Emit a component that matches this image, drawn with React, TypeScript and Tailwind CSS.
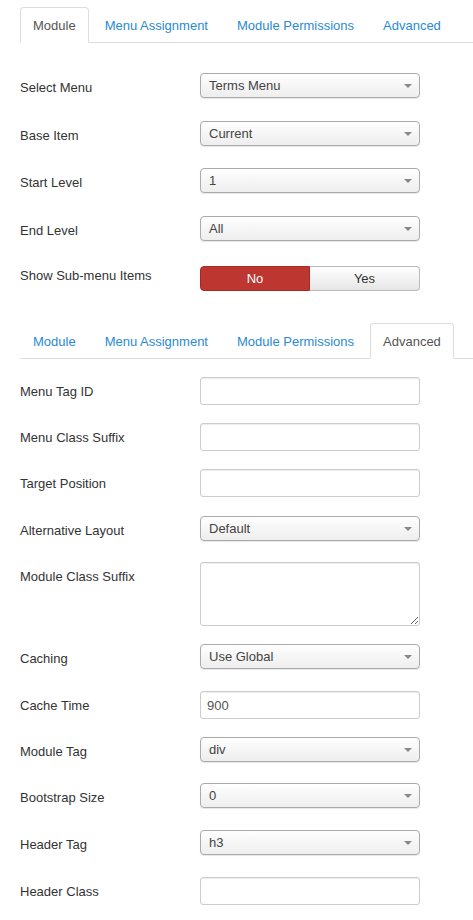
import type { ReactNode } from "react";

const tabs = ["Module", "Menu Assignment", "Module Permissions", "Advanced"];

function Tabs({ active }: { active: string }) {
  return (
    <ul className="flex border-b border-[#ddd]">
      {tabs.map((t) => (
        <li key={t} className="mr-[3px] -mb-px">
          {t === active ? (
            <span className="block h-[36px] px-[12px] pt-[9px] leading-[18px] border border-[#ddd] border-b-white rounded-t-[4px] bg-white text-[#555]">
              {t}
            </span>
          ) : (
            <span className="block h-[36px] px-[13px] pt-[10px] leading-[18px] text-[#2b8ad4]">
              {t}
            </span>
          )}
        </li>
      ))}
    </ul>
  );
}

function Row({
  label,
  h,
  lt = "pt-[6px]",
  children,
}: {
  label: string;
  h: string;
  lt?: string;
  children: ReactNode;
}) {
  return (
    <div className={`flex ${h}`}>
      <div className={`w-[180px] shrink-0 leading-[18px] text-[#333] ${lt}`}>
        {label}
      </div>
      <div>{children}</div>
    </div>
  );
}

function Select({ value }: { value: string }) {
  return (
    <div className="relative w-[220px] h-[25px] rounded-[4px] border border-[#aaa] bg-gradient-to-b from-white via-[#f6f6f6] to-[#eee] shadow-[0_1px_1px_rgba(0,0,0,0.1)] leading-[24px] pl-[8px] text-[#444]">
      {value}
      <span className="absolute right-[7px] top-[10px] border-x-[4px] border-x-transparent border-t-[4px] border-t-[#888]" />
    </div>
  );
}

function Input({ value = "" }: { value?: string }) {
  return (
    <input
      readOnly
      defaultValue={value}
      className="block w-[220px] h-[28px] rounded-[3px] border border-[#ccc] bg-white shadow-[inset_0_1px_1px_rgba(0,0,0,0.075)] pl-[6px] pt-[1px] text-[#555] outline-none"
    />
  );
}

function Toggle() {
  return (
    <div className="flex w-[220px] h-[25px] leading-[24px]">
      <div className="w-[110px] text-center text-white bg-[#bd362f] border border-[#a52b25] rounded-l-[4px]">
        No
      </div>
      <div className="flex-1 text-center text-[#333] bg-gradient-to-b from-white to-[#e6e6e6] border border-[#bbb] border-l-0 rounded-r-[4px]">
        Yes
      </div>
    </div>
  );
}

export default function App() {
  return (
    <div className="bg-white min-h-[920px] pl-[20px] pt-[7px] text-[13px] font-['Liberation_Sans',Arial,sans-serif]">
      <Tabs active="Module" />

      <div className="mt-[30px]">
        <Row label="Select Menu" h="h-[48px]">
          <Select value="Terms Menu" />
        </Row>
        <Row label="Base Item" h="h-[47px]">
          <Select value="Current" />
        </Row>
        <Row label="Start Level" h="h-[48px]">
          <Select value="1" />
        </Row>
        <Row label="End Level" h="h-[50px]">
          <Select value="All" />
        </Row>
        <Row label="Show Sub-menu Items" h="h-[57px]" lt="pt-[1px]">
          <Toggle />
        </Row>
      </div>

      <Tabs active="Advanced" />

      <div className="mt-[18px]">
        <Row label="Menu Tag ID" h="h-[46px]">
          <Input />
        </Row>
        <Row label="Menu Class Suffix" h="h-[46px]">
          <Input />
        </Row>
        <Row label="Target Position" h="h-[47px]">
          <Input />
        </Row>
        <Row label="Alternative Layout" h="h-[46px]">
          <Select value="Default" />
        </Row>
        <Row label="Module Class Suffix" h="h-[82px]">
          <textarea
            readOnly
            className="block w-[220px] h-[64px] rounded-[3px] border border-[#ccc] bg-white shadow-[inset_0_1px_1px_rgba(0,0,0,0.075)] outline-none"
          />
        </Row>
        <Row label="Caching" h="h-[47px]">
          <Select value="Use Global" />
        </Row>
        <Row label="Cache Time" h="h-[46px]">
          <Input value="900" />
        </Row>
        <Row label="Module Tag" h="h-[46px]">
          <Select value="div" />
        </Row>
        <Row label="Bootstrap Size" h="h-[47px]">
          <Select value="0" />
        </Row>
        <Row label="Header Tag" h="h-[47px]">
          <Select value="h3" />
        </Row>
        <Row label="Header Class" h="h-[46px]">
          <Input />
        </Row>
      </div>
    </div>
  );
}
